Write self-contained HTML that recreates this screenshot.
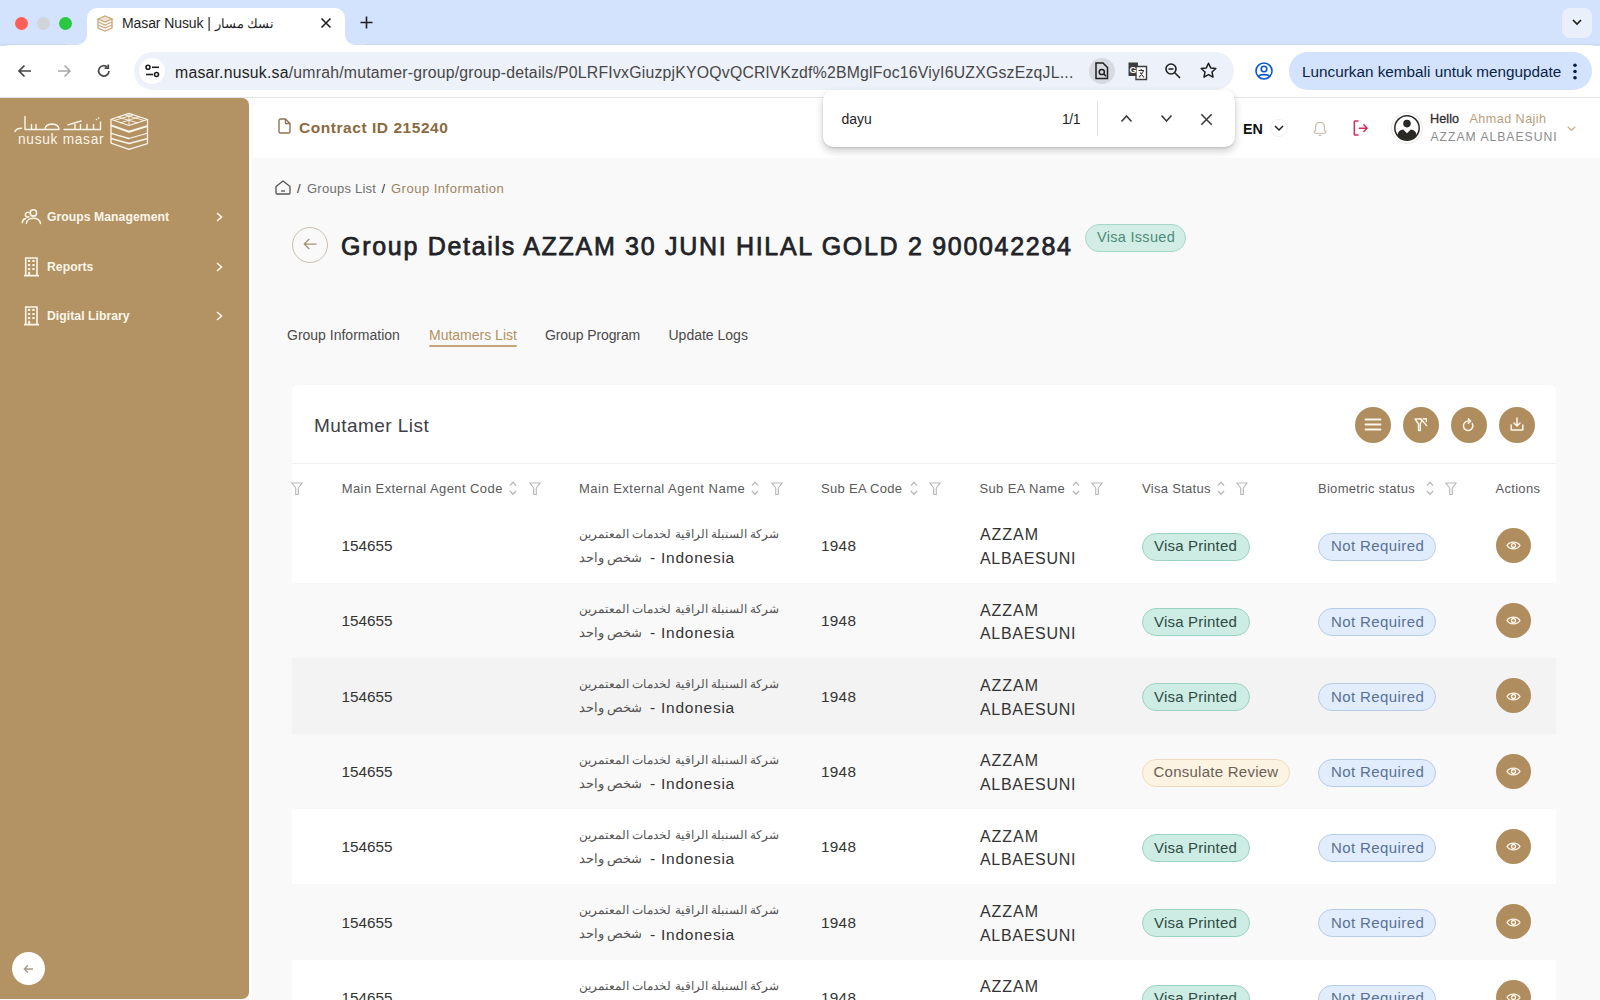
<!DOCTYPE html>
<html><head><meta charset="utf-8">
<style>
*{box-sizing:border-box;margin:0;padding:0}
html,body{width:1600px;height:1000px;overflow:hidden;background:#fff;font-family:"Liberation Sans",sans-serif}
.a{position:absolute}
.t{position:absolute;white-space:nowrap;line-height:1}
svg{position:absolute;overflow:visible}
#tabbar{left:0;top:0;width:1600px;height:46px;background:#d3e3fd}
#toolbar{left:0;top:45px;width:1600px;height:52px;background:#fff}
#tbline{left:0;top:97px;width:1600px;height:1px;background:#e3e6ea}
#page{left:0;top:98px;width:1600px;height:902px;background:#f9f9f9}
#sidebar{left:0;top:98px;width:249px;height:901px;background:#b39264;border-radius:0 7px 7px 0}
#header{left:253px;top:98px;width:1347px;height:60px;background:#fff}
.dot{width:13px;height:13px;border-radius:50%}
</style></head><body>
<!-- ===== BROWSER CHROME ===== -->
<div id="tabbar" class="a"></div>
<div class="a" style="left:0;top:44px;width:1600px;height:1px;background:#c9d7ec"></div>
<!-- active tab -->
<div class="a" style="left:87px;top:8px;width:258px;height:40px;background:#fff;border-radius:10px 10px 0 0"></div>
<div class="a" style="left:77px;top:35px;width:10px;height:11px;background:#fff"></div>
<div class="a" style="left:67px;top:25px;width:20px;height:20px;background:#d3e3fd;border-radius:0 0 10px 0"></div>
<div class="a" style="left:345px;top:35px;width:10px;height:11px;background:#fff"></div>
<div class="a" style="left:345px;top:25px;width:20px;height:20px;background:#d3e3fd;border-radius:0 0 0 10px"></div>
<div class="a dot" style="left:15px;top:17px;background:#fe5f57"></div>
<div class="a dot" style="left:37px;top:17px;background:#d1d4d9"></div>
<div class="a dot" style="left:59px;top:17px;background:#29c840"></div>
<!-- favicon -->
<svg style="left:96px;top:14px" width="18" height="18" viewBox="0 0 18 18" fill="none" stroke="#c9a77a" stroke-width="1.3">
<path d="M2 5 L9 2 L16 5 L9 8 Z" fill="#efe2cf"/><path d="M2 5 V14 L9 17 L16 14 V5"/><path d="M2 8 L9 11 L16 8 M2 11 L9 14 L16 11"/></svg>
<div class="t" style="left:122px;top:16px;font-size:14px;color:#1f1f1f;letter-spacing:-0.1px">Masar Nusuk | <span style="font-size:12.5px">نسك مسار</span></div>
<svg style="left:320px;top:17px" width="12" height="12" viewBox="0 0 12 12" stroke="#1f1f1f" stroke-width="1.6"><path d="M1.5 1.5 L10.5 10.5 M10.5 1.5 L1.5 10.5"/></svg>
<svg style="left:360px;top:16px" width="13" height="13" viewBox="0 0 13 13" stroke="#1f1f1f" stroke-width="1.6"><path d="M6.5 0.5 V12.5 M0.5 6.5 H12.5"/></svg>
<div class="a" style="left:1562px;top:8px;width:30px;height:30px;border-radius:8px;background:#e9effb"></div>
<svg style="left:1572px;top:19px" width="10" height="7" viewBox="0 0 10 7" fill="none" stroke="#1f1f1f" stroke-width="1.7"><path d="M1 1 L5 5 L9 1"/></svg>

<div id="toolbar" class="a" style="border-radius:10px 10px 0 0"></div>
<div id="tbline" class="a"></div>
<!-- nav icons -->
<svg style="left:17px;top:64px" width="15" height="14" viewBox="0 0 15 14" fill="none" stroke="#474747" stroke-width="1.7"><path d="M14 7 H2 M7.5 1.5 L2 7 L7.5 12.5"/></svg>
<svg style="left:57px;top:64px" width="15" height="14" viewBox="0 0 15 14" fill="none" stroke="#a8a8a8" stroke-width="1.6"><path d="M1 7 H13 M7.5 1.5 L13 7 L7.5 12.5"/></svg>
<svg style="left:97px;top:64px" width="14" height="14" viewBox="0 0 14 14" fill="none" stroke="#474747" stroke-width="1.7"><path d="M12 7 A5.2 5.2 0 1 1 10.3 3"/><path d="M11.3 0.5 V4.2 H7.6" stroke-linejoin="miter"/></svg>
<!-- address bar -->
<div class="a" style="left:134px;top:52px;width:1100px;height:38px;border-radius:19px;background:#edf1f9"></div>
<div class="a" style="left:139px;top:58px;width:26px;height:26px;border-radius:50%;background:#fff"></div>
<svg style="left:145px;top:64px" width="15" height="14" viewBox="0 0 15 14" fill="none" stroke="#1f1f1f" stroke-width="1.6"><circle cx="3" cy="3.3" r="2"/><path d="M7 3.3 H14"/><circle cx="11.5" cy="10.5" r="2"/><path d="M1 10.5 H8"/></svg>
<div class="t" style="left:175px;top:64.5px;font-size:15.8px;color:#1f1f1f;letter-spacing:0.22px"><span>masar.nusuk.sa</span><span style="color:#474747">/umrah/mutamer-group/group-details/P0LRFIvxGiuzpjKYOQvQCRlVKzdf%2BMglFoc16ViyI6UZXGszEzqJL...</span></div>
<div class="a" style="left:1089px;top:58px;width:26px;height:26px;border-radius:50%;background:#d7dbe1"></div>
<svg style="left:1095px;top:62px" width="14" height="18" viewBox="0 0 14 18" fill="none" stroke="#1f1f1f" stroke-width="1.5"><path d="M1 1 H8 L12.5 5.5 V16.5 H1 Z"/><circle cx="6.8" cy="10" r="2.6"/><path d="M8.7 11.9 L11 14.2"/></svg>
<svg style="left:1128px;top:62px" width="20" height="18" viewBox="0 0 20 18"><path d="M0.5 0.5 H10 V14 H0.5 Z" fill="#3c3c3c"/><path d="M8 4.5 H18.5 V17.5 H8 Z" fill="#fff" stroke="#3c3c3c" stroke-width="1.4"/><text x="1.5" y="11" font-size="9" font-weight="700" fill="#fff" font-family="Liberation Sans">G</text><path d="M10.5 8.5 H16 M13.2 7 V8.5 M11 15.5 L15.5 9 M12 10.5 L16 15.5" stroke="#3c3c3c" stroke-width="1.1" fill="none"/></svg>
<svg style="left:1165px;top:63px" width="16" height="16" viewBox="0 0 16 16" fill="none" stroke="#1f1f1f" stroke-width="1.6"><circle cx="6" cy="6" r="5"/><path d="M3.5 6 H8.5 M9.8 9.8 L15 15"/></svg>
<svg style="left:1200px;top:62px" width="17" height="17" viewBox="0 0 17 17" fill="none" stroke="#1f1f1f" stroke-width="1.5" stroke-linejoin="round"><path d="M8.5 1.2 L10.7 5.9 L15.8 6.5 L12 10 L13 15.2 L8.5 12.6 L4 15.2 L5 10 L1.2 6.5 L6.3 5.9 Z"/></svg>
<svg style="left:1255px;top:62px" width="18" height="18" viewBox="0 0 18 18" fill="none" stroke="#0b57d0" stroke-width="1.6"><circle cx="9" cy="9" r="8"/><circle cx="9" cy="7" r="2.8"/><path d="M3.6 14.5 C5 12 13 12 14.4 14.5"/></svg>
<div class="a" style="left:1289px;top:52px;width:303px;height:38px;border-radius:19px;background:#d3e3fd"></div>
<div class="t" style="left:1302px;top:64px;font-size:15.3px;color:#0a1f44">Luncurkan kembali untuk mengupdate</div>
<svg style="left:1572px;top:63px" width="6" height="17" viewBox="0 0 6 17" fill="#0a1f44"><circle cx="3" cy="2.2" r="1.8"/><circle cx="3" cy="8.5" r="1.8"/><circle cx="3" cy="14.8" r="1.8"/></svg>

<!-- ===== PAGE ===== -->
<div id="page" class="a"></div>
<div id="header" class="a"></div>
<div class="a" style="left:249px;top:98px;width:3px;height:902px;background:#fff"></div>
<div id="sidebar" class="a"></div>
<svg style="left:14px;top:115px" width="90" height="18" viewBox="0 0 90 18" fill="none" stroke="#fdf6ea" stroke-width="1.4" stroke-linecap="round" stroke-linejoin="round">
<path d="M1 16.5 Q2 13.5 7.5 13.2 M11 1.5 V14.5 H13 M13 14.5 H22 V9.5 M17.5 14.5 V9.5"/>
<path d="M22 14.5 H31 Q31 9.5 38 9 Q45 9.5 45 14.5 H44 M31 14.5 H45"/>
<path d="M50 14.5 H73 V9.5 M54 9.8 L67 6 M61 14.5 V9.5 M66.5 14.5 V9.5"/>
<path d="M73 14.5 H86.5 V7 M79.5 14.5 V9.5"/>
<path d="M82.5 4.5 h0.1 M84.5 3 h0.1" stroke-width="1.6"/>
</svg>
<div class="t" style="left:17.5px;top:131.5px;font-size:14.6px;color:#fdf6ea;letter-spacing:0.75px;transform:scaleX(0.94);transform-origin:0 0;-webkit-text-stroke:0px">nusuk masar</div>
<svg style="left:110px;top:112px" width="40" height="40" viewBox="0 0 40 40" fill="none" stroke="#fdf6ea" stroke-width="1.3" stroke-linejoin="round">
<path d="M1 7.3 L19 1.4 L37.5 7.5 L19 13.5 Z" stroke-width="1.2"/>
<path d="M19 1.4 L19 13.5 M8 5 L28 11 M30 4.5 L10 11 M4 8.5 L23 3 M34 8.5 L15 3" stroke-width="0.9"/>
<path d="M1 13.4 L19 19.8 L38 13.9" stroke-width="2"/>
<path d="M1 7.3 V31.2 M37.5 7.5 V31.7"/>
<path d="M1 21.4 L19 26.5 L38 21 M1 26.5 L19 31.5 L38 26.5 M1 31.2 L19 37.4 L37.5 31.7"/>
</svg>
<div class="t" style="left:47px;top:210.5px;font-size:12.2px;font-weight:700;color:#fdf6ea;letter-spacing:0.05px">Groups Management</div>
<svg style="left:216px;top:212px" width="7" height="10" viewBox="0 0 7 10" fill="none" stroke="#fdf6ea" stroke-width="1.6"><path d="M1 1 L5.5 5 L1 9"/></svg>
<div class="t" style="left:47px;top:260.5px;font-size:12.2px;font-weight:700;color:#fdf6ea;letter-spacing:0.05px">Reports</div>
<svg style="left:216px;top:262px" width="7" height="10" viewBox="0 0 7 10" fill="none" stroke="#fdf6ea" stroke-width="1.6"><path d="M1 1 L5.5 5 L1 9"/></svg>
<div class="t" style="left:47px;top:309.5px;font-size:12.2px;font-weight:700;color:#fdf6ea;letter-spacing:0.05px">Digital Library</div>
<svg style="left:216px;top:311px" width="7" height="10" viewBox="0 0 7 10" fill="none" stroke="#fdf6ea" stroke-width="1.6"><path d="M1 1 L5.5 5 L1 9"/></svg>
<svg style="left:21px;top:208px" width="21" height="17" viewBox="0 0 21 17" fill="none" stroke="#fdf6ea" stroke-width="1.55" stroke-linecap="round"><circle cx="12.4" cy="4.9" r="3.2"/><path d="M5.4 15.4 C5.4 8.6 19.5 8.6 19.5 15.4"/><path d="M7.9 4.6 A2.4 2.4 0 1 0 7.9 8.8"/><path d="M1.2 14.6 Q1.6 11 4.6 10.4"/></svg>
<svg style="left:23px;top:257px" width="17" height="20" viewBox="0 0 17 20" fill="none" stroke="#fdf6ea" stroke-width="1.6"><path d="M2.7 18.6 V1 H14 V18.6 M1 18.6 H16"/><g fill="#fdf6ea" stroke="none"><rect x="4.9" y="2.9" width="2.3" height="2.1"/><rect x="9.3" y="2.9" width="2.3" height="2.1"/><rect x="4.9" y="7" width="2.3" height="2.1"/><rect x="9.3" y="7" width="2.3" height="2.1"/><rect x="4.9" y="11" width="2.3" height="2.1"/><rect x="9.3" y="11" width="2.3" height="2.1"/><rect x="5.2" y="14.8" width="1.9" height="3.5"/></g></svg>
<svg style="left:23px;top:306px" width="17" height="20" viewBox="0 0 17 20" fill="none" stroke="#fdf6ea" stroke-width="1.6"><path d="M2.7 18.6 V1 H14 V18.6 M1 18.6 H16"/><g fill="#fdf6ea" stroke="none"><rect x="4.9" y="2.9" width="2.3" height="2.1"/><rect x="9.3" y="2.9" width="2.3" height="2.1"/><rect x="4.9" y="7" width="2.3" height="2.1"/><rect x="9.3" y="7" width="2.3" height="2.1"/><rect x="4.9" y="11" width="2.3" height="2.1"/><rect x="9.3" y="11" width="2.3" height="2.1"/><rect x="5.2" y="14.8" width="1.9" height="3.5"/></g></svg>
<div class="a" style="left:12px;top:952px;width:33px;height:33px;border-radius:50%;background:#fff"></div>
<svg style="left:23px;top:964px" width="11" height="10" viewBox="0 0 11 10" fill="none" stroke="#a89a88" stroke-width="1.3"><path d="M10 5 H1.5 M5 1.3 L1.3 5 L5 8.7"/></svg>
<svg style="left:278px;top:118px" width="13" height="16" viewBox="0 0 13 16" fill="none" stroke="#8a7556" stroke-width="1.4" stroke-linejoin="round"><path d="M1 2.5 Q1 1 2.5 1 H7.5 L12 5.5 V13.5 Q12 15 10.5 15 H2.5 Q1 15 1 13.5 Z"/><path d="M7.5 1 V5.5 H12"/></svg>
<div class="t" style="left:299px;top:120px;font-size:15.5px;font-weight:700;color:#8a6a3e;letter-spacing:0.55px">Contract ID 215240</div>
<div class="t" style="left:1243px;top:122px;font-size:14.3px;font-weight:700;color:#111">EN</div>
<div class="a" style="left:1270px;top:119px;width:18px;height:18px;border-radius:50%;border:1px solid #f1f1f1"></div>
<svg style="left:1274px;top:125px" width="10" height="6" viewBox="0 0 10 6" fill="none" stroke="#222" stroke-width="1.5"><path d="M1 1 L5 5 L9 1"/></svg>
<svg style="left:1312px;top:120px" width="16" height="17" viewBox="0 0 16 17" fill="none" stroke="#c5b7a5" stroke-width="1.15"><path d="M3.6 10.2 V6.6 A4.4 4.4 0 0 1 12.4 6.6 V10.2 Q14 10.6 14 12 Q14 13.2 12.6 13.2 H3.4 Q2 13.2 2 12 Q2 10.6 3.6 10.2 Z"/><path d="M6.9 15.4 H9.1"/></svg>
<svg style="left:1353px;top:120px" width="17" height="16" viewBox="0 0 17 16" fill="none" stroke="#d42a5c" stroke-width="1.45" stroke-linejoin="round" stroke-linecap="round"><path d="M5 1 H2 Q1.3 1 1.3 1.8 V14.2 Q1.3 15 2 15 H5"/><path d="M6.3 8.2 H14.2 M10.8 4.8 L14.2 8.2 L10.8 11.6"/></svg>
<div class="a" style="left:1391px;top:112px;width:32px;height:32px;border-radius:50%;border:1px solid #e8e8e8;background:#fff"></div>
<svg style="left:1394px;top:115px" width="26" height="26" viewBox="0 0 26 26"><defs><clipPath id="avc"><circle cx="13" cy="13" r="12"/></clipPath></defs><circle cx="13" cy="13" r="12.2" fill="#fff" stroke="#2b2925" stroke-width="1.5"/><g clip-path="url(#avc)" fill="#2b2925"><circle cx="13" cy="8.6" r="3.8"/><path d="M3.5 26 V20 Q4 15.2 9.2 14.6 L13 18.3 L16.8 14.6 Q22 15.2 22.5 20 V26 Z"/></g></svg>
<div class="t" style="left:1430px;top:112.5px;font-size:12.6px;color:#2d2d2d;letter-spacing:0.1px;-webkit-text-stroke:0.3px #2d2d2d">Hello</div>
<div class="t" style="left:1469.5px;top:112.5px;font-size:12.6px;color:#b89e7b;letter-spacing:0.45px">Ahmad Najih</div>
<div class="t" style="left:1430.5px;top:130.5px;font-size:12.2px;color:#8c8c8c;letter-spacing:0.98px">AZZAM ALBAESUNI</div>
<svg style="left:1567px;top:126px" width="9" height="5" viewBox="0 0 9 5" fill="none" stroke="#c9b08f" stroke-width="1.3"><path d="M0.7 0.7 L4.5 4.3 L8.3 0.7"/></svg>
<div class="a" style="left:823px;top:90px;width:412px;height:57px;border-radius:10px;background:#fff;box-shadow:0 4px 8px rgba(0,0,0,0.2),0 1px 2px rgba(0,0,0,0.12)"></div>
<div class="t" style="left:841.5px;top:112px;font-size:14px;color:#1f1f1f">dayu</div>
<div class="t" style="left:1062px;top:112px;font-size:14px;color:#1f1f1f;letter-spacing:-0.5px">1/1</div>
<div class="a" style="left:1096.5px;top:101px;width:1px;height:35px;background:#dfe4ee"></div>
<svg style="left:1120px;top:114px" width="13" height="9" viewBox="0 0 13 9" fill="none" stroke="#3c3c3c" stroke-width="1.6"><path d="M1.5 7.5 L6.5 2 L11.5 7.5"/></svg>
<svg style="left:1160px;top:114px" width="13" height="9" viewBox="0 0 13 9" fill="none" stroke="#3c3c3c" stroke-width="1.6"><path d="M1.5 1.5 L6.5 7 L11.5 1.5"/></svg>
<svg style="left:1200px;top:113px" width="13" height="13" viewBox="0 0 13 13" fill="none" stroke="#3c3c3c" stroke-width="1.6"><path d="M1.3 1.3 L11.7 11.7 M11.7 1.3 L1.3 11.7"/></svg>
<svg style="left:275px;top:180px" width="16" height="15" viewBox="0 0 16 15" fill="none" stroke="#555" stroke-width="1.3" stroke-linejoin="round"><path d="M1 6.5 L8 1 L15 6.5 V13 Q15 14 14 14 H2 Q1 14 1 13 Z"/><path d="M6 11 H10"/></svg>
<div class="t" style="left:297px;top:182px;font-size:13px;color:#333">/</div>
<div class="t" style="left:307px;top:182px;font-size:13px;color:#6f6f6f;letter-spacing:0.25px">Groups List</div>
<div class="t" style="left:381.5px;top:182px;font-size:13px;color:#333">/</div>
<div class="t" style="left:391px;top:182px;font-size:13px;color:#9c835f;letter-spacing:0.5px">Group Information</div>
<div class="a" style="left:292px;top:226.5px;width:36px;height:36px;border-radius:50%;border:1px solid #cbbfae"></div>
<svg style="left:303px;top:238px" width="14" height="12" viewBox="0 0 14 12" fill="none" stroke="#a38e6f" stroke-width="1.25" stroke-linecap="round"><path d="M13 6 H1.5 M6 1.3 L1.3 6 L6 10.7"/></svg>
<div class="t" style="left:341px;top:233.6px;font-size:25px;font-weight:400;color:#212328;letter-spacing:1.7px;-webkit-text-stroke:0.75px #212328">Group Details AZZAM 30 JUNI HILAL GOLD 2 900042284</div>
<div class="a" style="left:1085px;top:224px;width:101px;height:28px;border-radius:14px;background:#d2ede5;border:1px solid #a6d8c6"></div>
<div class="t" style="left:1097px;top:230px;font-size:14.5px;color:#4d8a78;letter-spacing:0.3px">Visa Issued</div>
<div class="t" style="left:287px;top:327.5px;font-size:14px;color:#4a4a4a;letter-spacing:0.0px">Group Information</div>
<div class="t" style="left:429px;top:327.5px;font-size:14px;color:#b39264;letter-spacing:0.0px">Mutamers List</div>
<div class="t" style="left:545px;top:327.5px;font-size:14px;color:#4a4a4a;letter-spacing:-0.1px">Group Program</div>
<div class="t" style="left:668.5px;top:327.5px;font-size:14px;color:#4a4a4a;letter-spacing:0.0px">Update Logs</div>
<div class="a" style="left:429px;top:345px;width:88px;height:2px;border-radius:1px;background:#c6a77c"></div>
<div class="a" style="left:292px;top:385px;width:1264px;height:615px;background:#fff;border-radius:6px"></div>
<div class="t" style="left:314px;top:416px;font-size:19px;color:#3d4047;letter-spacing:0.45px">Mutamer List</div>
<div class="a" style="left:1355px;top:407px;width:36px;height:36px;border-radius:50%;background:#b08d5e"></div>
<div class="a" style="left:1403px;top:407px;width:36px;height:36px;border-radius:50%;background:#b08d5e"></div>
<div class="a" style="left:1451px;top:407px;width:36px;height:36px;border-radius:50%;background:#b08d5e"></div>
<div class="a" style="left:1499px;top:407px;width:36px;height:36px;border-radius:50%;background:#b08d5e"></div>
<svg style="left:1364px;top:418px" width="18" height="13" viewBox="0 0 18 13" fill="none" stroke="#fdf6ea" stroke-width="1.8" stroke-linecap="round"><path d="M1.5 1.5 H16.5 M1.5 6.5 H16.5 M1.5 11.5 H16.5"/></svg>
<svg style="left:1414px;top:417px" width="14" height="15" viewBox="0 0 14 15" fill="none" stroke="#fdf6ea" stroke-width="1.4" stroke-linejoin="round" stroke-linecap="round"><path d="M1 2 H6.5 L8 3.8 L6.3 6.5 V13.5 H4.5 V7 Z"/><path d="M6.8 1.8 L12.6 8.6 M9.2 1.8 H12.3 V4.6"/></svg>
<svg style="left:1462px;top:418px" width="14" height="14" viewBox="0 0 14 14" fill="none" stroke="#fdf6ea" stroke-width="1.5" stroke-linecap="round" stroke-linejoin="round"><path d="M10.3 5.6 A4.7 4.7 0 1 1 6.6 3.1"/><path d="M6.3 0.9 L8.6 3.1 L6.3 5.3"/></svg>
<svg style="left:1510px;top:417px" width="14" height="14" viewBox="0 0 14 14" fill="none" stroke="#fdf6ea" stroke-width="1.5" stroke-linecap="round" stroke-linejoin="round"><path d="M7 1 V9 M4 6 L7 9 L10 6"/><path d="M1.2 8 V13 H12.8 V8"/></svg>
<div class="a" style="left:292px;top:462.5px;width:1264px;height:1px;background:#f0f0f0"></div>
<svg style="left:291px;top:481.5px" width="12" height="14" viewBox="0 0 12 14" fill="none" stroke="#b8b8b8" stroke-width="1.15" stroke-linejoin="round"><path d="M0.8 1 H11.2 L7.3 6 V12.5 H4.7 V6 Z"/></svg>
<div class="t" style="left:341.7px;top:482px;font-size:13px;color:#5a5a5a;letter-spacing:0.42px">Main External Agent Code</div>
<svg style="left:509px;top:480px" width="8" height="16" viewBox="0 0 8 16" fill="none" stroke="#b8b8b8" stroke-width="1.3"><path d="M0.9 5.6 L4 2.3 L7.1 5.6 M0.9 11 L4 14.3 L7.1 11"/></svg>
<svg style="left:529px;top:481.5px" width="12" height="14" viewBox="0 0 12 14" fill="none" stroke="#b8b8b8" stroke-width="1.15" stroke-linejoin="round"><path d="M0.8 1 H11.2 L7.3 6 V12.5 H4.7 V6 Z"/></svg>
<div class="t" style="left:579px;top:482px;font-size:13px;color:#5a5a5a;letter-spacing:0.48px">Main External Agent Name</div>
<svg style="left:751px;top:480px" width="8" height="16" viewBox="0 0 8 16" fill="none" stroke="#b8b8b8" stroke-width="1.3"><path d="M0.9 5.6 L4 2.3 L7.1 5.6 M0.9 11 L4 14.3 L7.1 11"/></svg>
<svg style="left:771px;top:481.5px" width="12" height="14" viewBox="0 0 12 14" fill="none" stroke="#b8b8b8" stroke-width="1.15" stroke-linejoin="round"><path d="M0.8 1 H11.2 L7.3 6 V12.5 H4.7 V6 Z"/></svg>
<div class="t" style="left:821px;top:482px;font-size:13px;color:#5a5a5a;letter-spacing:0.3px">Sub EA Code</div>
<svg style="left:910px;top:480px" width="8" height="16" viewBox="0 0 8 16" fill="none" stroke="#b8b8b8" stroke-width="1.3"><path d="M0.9 5.6 L4 2.3 L7.1 5.6 M0.9 11 L4 14.3 L7.1 11"/></svg>
<svg style="left:929px;top:481.5px" width="12" height="14" viewBox="0 0 12 14" fill="none" stroke="#b8b8b8" stroke-width="1.15" stroke-linejoin="round"><path d="M0.8 1 H11.2 L7.3 6 V12.5 H4.7 V6 Z"/></svg>
<div class="t" style="left:979.5px;top:482px;font-size:13px;color:#5a5a5a;letter-spacing:0.35px">Sub EA Name</div>
<svg style="left:1072px;top:480px" width="8" height="16" viewBox="0 0 8 16" fill="none" stroke="#b8b8b8" stroke-width="1.3"><path d="M0.9 5.6 L4 2.3 L7.1 5.6 M0.9 11 L4 14.3 L7.1 11"/></svg>
<svg style="left:1091px;top:481.5px" width="12" height="14" viewBox="0 0 12 14" fill="none" stroke="#b8b8b8" stroke-width="1.15" stroke-linejoin="round"><path d="M0.8 1 H11.2 L7.3 6 V12.5 H4.7 V6 Z"/></svg>
<div class="t" style="left:1142px;top:482px;font-size:13px;color:#5a5a5a;letter-spacing:0.3px">Visa Status</div>
<svg style="left:1217px;top:480px" width="8" height="16" viewBox="0 0 8 16" fill="none" stroke="#b8b8b8" stroke-width="1.3"><path d="M0.9 5.6 L4 2.3 L7.1 5.6 M0.9 11 L4 14.3 L7.1 11"/></svg>
<svg style="left:1236px;top:481.5px" width="12" height="14" viewBox="0 0 12 14" fill="none" stroke="#b8b8b8" stroke-width="1.15" stroke-linejoin="round"><path d="M0.8 1 H11.2 L7.3 6 V12.5 H4.7 V6 Z"/></svg>
<div class="t" style="left:1318px;top:482px;font-size:13px;color:#5a5a5a;letter-spacing:0.28px">Biometric status</div>
<svg style="left:1426px;top:480px" width="8" height="16" viewBox="0 0 8 16" fill="none" stroke="#b8b8b8" stroke-width="1.3"><path d="M0.9 5.6 L4 2.3 L7.1 5.6 M0.9 11 L4 14.3 L7.1 11"/></svg>
<svg style="left:1445px;top:481.5px" width="12" height="14" viewBox="0 0 12 14" fill="none" stroke="#b8b8b8" stroke-width="1.15" stroke-linejoin="round"><path d="M0.8 1 H11.2 L7.3 6 V12.5 H4.7 V6 Z"/></svg>
<div class="t" style="left:1495.5px;top:482px;font-size:13px;color:#5a5a5a;letter-spacing:0.3px">Actions</div>
<div class="a" style="left:292px;top:507.5px;width:1264px;height:75.8px;background:#fff"></div>
<div class="t" style="left:341.5px;top:538.0px;font-size:15.3px;color:#333">154655</div>
<div class="t" style="left:579px;top:527.5px;font-size:12px;color:#555" dir="rtl">شركة السنبلة الراقية لخدمات المعتمرين</div>
<div class="t" style="left:579px;top:551.5px;font-size:12.5px;color:#555"><span dir="rtl">شخص واحد</span></div>
<div class="t" style="left:650px;top:549.7px;font-size:15.5px;color:#333;letter-spacing:0.75px">- Indonesia</div>
<div class="t" style="left:821px;top:538.0px;font-size:15.3px;color:#333;letter-spacing:0.3px">1948</div>
<div class="t" style="left:980px;top:527.3px;font-size:16px;color:#333;letter-spacing:0.95px">AZZAM</div>
<div class="t" style="left:980px;top:551.0px;font-size:16px;color:#333;letter-spacing:0.7px">ALBAESUNI</div>
<div class="a" style="left:1142px;top:532.5px;width:108px;height:28px;border-radius:14px;background:#cdece3;border:1px solid #9dd3c0"></div>
<div class="t" style="left:1154px;top:538.2px;font-size:15px;color:#2f4b44;letter-spacing:0.2px">Visa Printed</div>
<div class="a" style="left:1318px;top:532.5px;width:118px;height:28px;border-radius:14px;background:#e1edfc;border:1px solid #b7cce8"></div>
<div class="t" style="left:1331px;top:538.2px;font-size:15px;color:#5a7196;letter-spacing:0.4px">Not Required</div>
<div class="a" style="left:1495.5px;top:527.5px;width:35px;height:35px;border-radius:50%;background:#b08d5e"></div>
<svg style="left:1506px;top:540.0px" width="15" height="11" viewBox="0 0 15 11" fill="none" stroke="#fdf6ea" stroke-width="1.3"><path d="M1 5.5 C3.5 1 11.5 1 14 5.5 C11.5 10 3.5 10 1 5.5 Z"/><circle cx="7.5" cy="5.5" r="2"/></svg>
<div class="a" style="left:292px;top:582.9px;width:1264px;height:75.8px;background:#f9f9f9"></div>
<div class="t" style="left:341.5px;top:613.4px;font-size:15.3px;color:#333">154655</div>
<div class="t" style="left:579px;top:602.9px;font-size:12px;color:#555" dir="rtl">شركة السنبلة الراقية لخدمات المعتمرين</div>
<div class="t" style="left:579px;top:626.9px;font-size:12.5px;color:#555"><span dir="rtl">شخص واحد</span></div>
<div class="t" style="left:650px;top:625.1px;font-size:15.5px;color:#333;letter-spacing:0.75px">- Indonesia</div>
<div class="t" style="left:821px;top:613.4px;font-size:15.3px;color:#333;letter-spacing:0.3px">1948</div>
<div class="t" style="left:980px;top:602.6px;font-size:16px;color:#333;letter-spacing:0.95px">AZZAM</div>
<div class="t" style="left:980px;top:626.4px;font-size:16px;color:#333;letter-spacing:0.7px">ALBAESUNI</div>
<div class="a" style="left:1142px;top:607.9px;width:108px;height:28px;border-radius:14px;background:#cdece3;border:1px solid #9dd3c0"></div>
<div class="t" style="left:1154px;top:613.6px;font-size:15px;color:#2f4b44;letter-spacing:0.2px">Visa Printed</div>
<div class="a" style="left:1318px;top:607.9px;width:118px;height:28px;border-radius:14px;background:#e1edfc;border:1px solid #b7cce8"></div>
<div class="t" style="left:1331px;top:613.6px;font-size:15px;color:#5a7196;letter-spacing:0.4px">Not Required</div>
<div class="a" style="left:1495.5px;top:602.9px;width:35px;height:35px;border-radius:50%;background:#b08d5e"></div>
<svg style="left:1506px;top:615.4px" width="15" height="11" viewBox="0 0 15 11" fill="none" stroke="#fdf6ea" stroke-width="1.3"><path d="M1 5.5 C3.5 1 11.5 1 14 5.5 C11.5 10 3.5 10 1 5.5 Z"/><circle cx="7.5" cy="5.5" r="2"/></svg>
<div class="a" style="left:292px;top:658.2px;width:1264px;height:75.8px;background:#f3f3f3"></div>
<div class="t" style="left:341.5px;top:688.7px;font-size:15.3px;color:#333">154655</div>
<div class="t" style="left:579px;top:678.2px;font-size:12px;color:#555" dir="rtl">شركة السنبلة الراقية لخدمات المعتمرين</div>
<div class="t" style="left:579px;top:702.2px;font-size:12.5px;color:#555"><span dir="rtl">شخص واحد</span></div>
<div class="t" style="left:650px;top:700.4px;font-size:15.5px;color:#333;letter-spacing:0.75px">- Indonesia</div>
<div class="t" style="left:821px;top:688.7px;font-size:15.3px;color:#333;letter-spacing:0.3px">1948</div>
<div class="t" style="left:980px;top:678.0px;font-size:16px;color:#333;letter-spacing:0.95px">AZZAM</div>
<div class="t" style="left:980px;top:701.7px;font-size:16px;color:#333;letter-spacing:0.7px">ALBAESUNI</div>
<div class="a" style="left:1142px;top:683.2px;width:108px;height:28px;border-radius:14px;background:#cdece3;border:1px solid #9dd3c0"></div>
<div class="t" style="left:1154px;top:688.9px;font-size:15px;color:#2f4b44;letter-spacing:0.2px">Visa Printed</div>
<div class="a" style="left:1318px;top:683.2px;width:118px;height:28px;border-radius:14px;background:#e1edfc;border:1px solid #b7cce8"></div>
<div class="t" style="left:1331px;top:688.9px;font-size:15px;color:#5a7196;letter-spacing:0.4px">Not Required</div>
<div class="a" style="left:1495.5px;top:678.2px;width:35px;height:35px;border-radius:50%;background:#b08d5e"></div>
<svg style="left:1506px;top:690.7px" width="15" height="11" viewBox="0 0 15 11" fill="none" stroke="#fdf6ea" stroke-width="1.3"><path d="M1 5.5 C3.5 1 11.5 1 14 5.5 C11.5 10 3.5 10 1 5.5 Z"/><circle cx="7.5" cy="5.5" r="2"/></svg>
<div class="a" style="left:292px;top:733.5px;width:1264px;height:75.8px;background:#f9f9f9"></div>
<div class="t" style="left:341.5px;top:764.0px;font-size:15.3px;color:#333">154655</div>
<div class="t" style="left:579px;top:753.5px;font-size:12px;color:#555" dir="rtl">شركة السنبلة الراقية لخدمات المعتمرين</div>
<div class="t" style="left:579px;top:777.5px;font-size:12.5px;color:#555"><span dir="rtl">شخص واحد</span></div>
<div class="t" style="left:650px;top:775.8px;font-size:15.5px;color:#333;letter-spacing:0.75px">- Indonesia</div>
<div class="t" style="left:821px;top:764.0px;font-size:15.3px;color:#333;letter-spacing:0.3px">1948</div>
<div class="t" style="left:980px;top:753.3px;font-size:16px;color:#333;letter-spacing:0.95px">AZZAM</div>
<div class="t" style="left:980px;top:777.0px;font-size:16px;color:#333;letter-spacing:0.7px">ALBAESUNI</div>
<div class="a" style="left:1142px;top:758.5px;width:148px;height:28px;border-radius:14px;background:#fdf3e3;border:1px solid #eedbbd"></div>
<div class="t" style="left:1153.5px;top:764.2px;font-size:15px;color:#6b6153;letter-spacing:0.25px">Consulate Review</div>
<div class="a" style="left:1318px;top:758.5px;width:118px;height:28px;border-radius:14px;background:#e1edfc;border:1px solid #b7cce8"></div>
<div class="t" style="left:1331px;top:764.2px;font-size:15px;color:#5a7196;letter-spacing:0.4px">Not Required</div>
<div class="a" style="left:1495.5px;top:753.5px;width:35px;height:35px;border-radius:50%;background:#b08d5e"></div>
<svg style="left:1506px;top:766.0px" width="15" height="11" viewBox="0 0 15 11" fill="none" stroke="#fdf6ea" stroke-width="1.3"><path d="M1 5.5 C3.5 1 11.5 1 14 5.5 C11.5 10 3.5 10 1 5.5 Z"/><circle cx="7.5" cy="5.5" r="2"/></svg>
<div class="a" style="left:292px;top:808.9px;width:1264px;height:75.8px;background:#fff"></div>
<div class="t" style="left:341.5px;top:839.4px;font-size:15.3px;color:#333">154655</div>
<div class="t" style="left:579px;top:828.9px;font-size:12px;color:#555" dir="rtl">شركة السنبلة الراقية لخدمات المعتمرين</div>
<div class="t" style="left:579px;top:852.9px;font-size:12.5px;color:#555"><span dir="rtl">شخص واحد</span></div>
<div class="t" style="left:650px;top:851.1px;font-size:15.5px;color:#333;letter-spacing:0.75px">- Indonesia</div>
<div class="t" style="left:821px;top:839.4px;font-size:15.3px;color:#333;letter-spacing:0.3px">1948</div>
<div class="t" style="left:980px;top:828.7px;font-size:16px;color:#333;letter-spacing:0.95px">AZZAM</div>
<div class="t" style="left:980px;top:852.4px;font-size:16px;color:#333;letter-spacing:0.7px">ALBAESUNI</div>
<div class="a" style="left:1142px;top:833.9px;width:108px;height:28px;border-radius:14px;background:#cdece3;border:1px solid #9dd3c0"></div>
<div class="t" style="left:1154px;top:839.6px;font-size:15px;color:#2f4b44;letter-spacing:0.2px">Visa Printed</div>
<div class="a" style="left:1318px;top:833.9px;width:118px;height:28px;border-radius:14px;background:#e1edfc;border:1px solid #b7cce8"></div>
<div class="t" style="left:1331px;top:839.6px;font-size:15px;color:#5a7196;letter-spacing:0.4px">Not Required</div>
<div class="a" style="left:1495.5px;top:828.9px;width:35px;height:35px;border-radius:50%;background:#b08d5e"></div>
<svg style="left:1506px;top:841.4px" width="15" height="11" viewBox="0 0 15 11" fill="none" stroke="#fdf6ea" stroke-width="1.3"><path d="M1 5.5 C3.5 1 11.5 1 14 5.5 C11.5 10 3.5 10 1 5.5 Z"/><circle cx="7.5" cy="5.5" r="2"/></svg>
<div class="a" style="left:292px;top:884.2px;width:1264px;height:75.8px;background:#f9f9f9"></div>
<div class="t" style="left:341.5px;top:914.8px;font-size:15.3px;color:#333">154655</div>
<div class="t" style="left:579px;top:904.2px;font-size:12px;color:#555" dir="rtl">شركة السنبلة الراقية لخدمات المعتمرين</div>
<div class="t" style="left:579px;top:928.2px;font-size:12.5px;color:#555"><span dir="rtl">شخص واحد</span></div>
<div class="t" style="left:650px;top:926.5px;font-size:15.5px;color:#333;letter-spacing:0.75px">- Indonesia</div>
<div class="t" style="left:821px;top:914.8px;font-size:15.3px;color:#333;letter-spacing:0.3px">1948</div>
<div class="t" style="left:980px;top:904.0px;font-size:16px;color:#333;letter-spacing:0.95px">AZZAM</div>
<div class="t" style="left:980px;top:927.8px;font-size:16px;color:#333;letter-spacing:0.7px">ALBAESUNI</div>
<div class="a" style="left:1142px;top:909.2px;width:108px;height:28px;border-radius:14px;background:#cdece3;border:1px solid #9dd3c0"></div>
<div class="t" style="left:1154px;top:915.0px;font-size:15px;color:#2f4b44;letter-spacing:0.2px">Visa Printed</div>
<div class="a" style="left:1318px;top:909.2px;width:118px;height:28px;border-radius:14px;background:#e1edfc;border:1px solid #b7cce8"></div>
<div class="t" style="left:1331px;top:915.0px;font-size:15px;color:#5a7196;letter-spacing:0.4px">Not Required</div>
<div class="a" style="left:1495.5px;top:904.2px;width:35px;height:35px;border-radius:50%;background:#b08d5e"></div>
<svg style="left:1506px;top:916.8px" width="15" height="11" viewBox="0 0 15 11" fill="none" stroke="#fdf6ea" stroke-width="1.3"><path d="M1 5.5 C3.5 1 11.5 1 14 5.5 C11.5 10 3.5 10 1 5.5 Z"/><circle cx="7.5" cy="5.5" r="2"/></svg>
<div class="a" style="left:292px;top:959.6px;width:1264px;height:75.8px;background:#fff"></div>
<div class="t" style="left:341.5px;top:990.1px;font-size:15.3px;color:#333">154655</div>
<div class="t" style="left:579px;top:979.6px;font-size:12px;color:#555" dir="rtl">شركة السنبلة الراقية لخدمات المعتمرين</div>
<div class="t" style="left:579px;top:1003.6px;font-size:12.5px;color:#555"><span dir="rtl">شخص واحد</span></div>
<div class="t" style="left:650px;top:1001.8px;font-size:15.5px;color:#333;letter-spacing:0.75px">- Indonesia</div>
<div class="t" style="left:821px;top:990.1px;font-size:15.3px;color:#333;letter-spacing:0.3px">1948</div>
<div class="t" style="left:980px;top:979.4px;font-size:16px;color:#333;letter-spacing:0.95px">AZZAM</div>
<div class="t" style="left:980px;top:1003.1px;font-size:16px;color:#333;letter-spacing:0.7px">ALBAESUNI</div>
<div class="a" style="left:1142px;top:984.6px;width:108px;height:28px;border-radius:14px;background:#cdece3;border:1px solid #9dd3c0"></div>
<div class="t" style="left:1154px;top:990.3px;font-size:15px;color:#2f4b44;letter-spacing:0.2px">Visa Printed</div>
<div class="a" style="left:1318px;top:984.6px;width:118px;height:28px;border-radius:14px;background:#e1edfc;border:1px solid #b7cce8"></div>
<div class="t" style="left:1331px;top:990.3px;font-size:15px;color:#5a7196;letter-spacing:0.4px">Not Required</div>
<div class="a" style="left:1495.5px;top:979.6px;width:35px;height:35px;border-radius:50%;background:#b08d5e"></div>
<svg style="left:1506px;top:992.1px" width="15" height="11" viewBox="0 0 15 11" fill="none" stroke="#fdf6ea" stroke-width="1.3"><path d="M1 5.5 C3.5 1 11.5 1 14 5.5 C11.5 10 3.5 10 1 5.5 Z"/><circle cx="7.5" cy="5.5" r="2"/></svg>
</body></html>
